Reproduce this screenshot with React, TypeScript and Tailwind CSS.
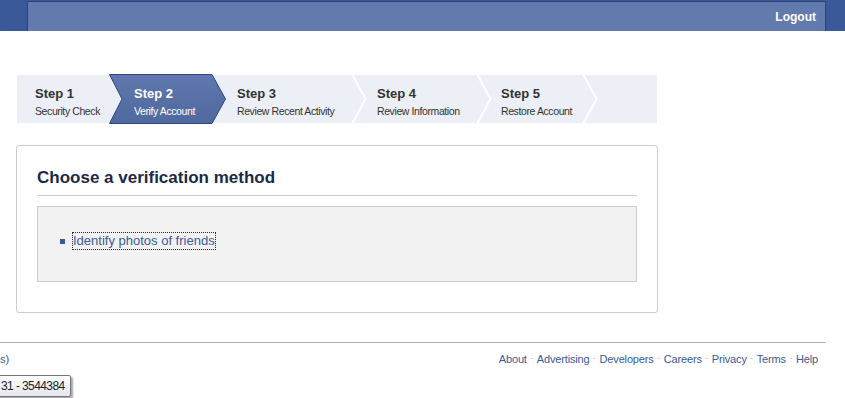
const steps = [
  { title: "Step 1", sub: "Security Check", w: "w-[92px]", pl: "pl-[18px]" },
  { title: "Step 2", sub: "Verify Account", w: "w-[103px]", pl: "pl-[25px]", active: true },
  { title: "Step 3", sub: "Review Recent Activity", w: "w-[140px]", pl: "pl-[25px]", sep: true },
  { title: "Step 4", sub: "Review Information", w: "w-[125px]", pl: "pl-[25px]", sep: true },
  { title: "Step 5", sub: "Restore Account", w: "w-[106px]", pl: "pl-[24px]", sep: true },
]

const footerLinks = ["About", "Advertising", "Developers", "Careers", "Privacy", "Terms", "Help"]

function StepBar() {
  return (
    <div className="ml-px flex h-[48px] w-[640px] bg-[#eceff5]">
      {steps.map((s) => (
        <div key={s.title} className={`relative shrink-0 ${s.w} ${s.pl} pt-[11px]`}>
          {s.active && (
            <svg className="absolute -top-px left-0" width="119" height="50" viewBox="0 0 119 50">
              <defs>
                <linearGradient id="act" x1="0" y1="0" x2="0" y2="1">
                  <stop offset="0" stopColor="#6078ad" />
                  <stop offset="1" stopColor="#4f689e" />
                </linearGradient>
              </defs>
              <polygon
                points="0.5,0.5 103,0.5 116.5,25 103,49.5 0.5,49.5 13,25"
                fill="url(#act)"
                stroke="#2c4784"
                strokeWidth="1"
              />
            </svg>
          )}
          {s.sep && (
            <svg className="absolute top-0 left-full z-10 overflow-visible" width="16" height="48" viewBox="0 0 16 48">
              <polyline points="0,-1 13.5,24 0,49" fill="none" stroke="#ffffff" strokeWidth="2" />
            </svg>
          )}
          <div className={`relative z-20 whitespace-nowrap ${s.active ? "text-white" : "text-[#333333]"}`}>
            <div className="text-[13px] leading-[16px] font-bold">{s.title}</div>
            <div className="mt-[2px] text-[10.5px] leading-[14px] tracking-[-0.4px]">{s.sub}</div>
          </div>
        </div>
      ))}
      <div className="flex-1" />
    </div>
  )
}

export default function App() {
  return (
    <div className="relative min-h-[398px] w-[845px] overflow-hidden bg-white font-['Liberation_Sans',Arial,sans-serif]">
      {/* header */}
      <div className="h-[31px] bg-[#3b5998] pt-px pl-[27px] pr-[19px]">
        <div className="flex h-full items-center justify-end border border-b-0 border-[#27427c] bg-[#627aad] pr-[9px]">
          <span className="text-[12px] leading-[14px] font-bold text-white">Logout</span>
        </div>
      </div>

      {/* main */}
      <div className="w-[826px] pl-[16px]">
        <div className="mt-[44px]">
          <StepBar />
        </div>

        <div className="mt-[22px] w-[642px] rounded-[3px] border border-[#cccccc] px-[20px] pt-[22px] pb-[30px]">
          <h2 className="border-b border-[#cccccc] pb-[7px] text-[17px] leading-[20px] font-bold text-[#1c2a47]">
            Choose a verification method
          </h2>
          <div className="mt-[10px] border border-[#cccccc] bg-[#f2f2f2] pt-[25px] pb-[31px] pl-[22px]">
            <div className="flex items-center">
              <span className="h-[5px] w-[5px] bg-[#3b5998]" />
              <a className="ml-[7px] border border-dotted border-[#1c2a47] text-[13px] leading-[16px] text-[#3b5998]">
                Identify photos of friends
              </a>
            </div>
          </div>
        </div>
      </div>

      {/* footer */}
      <div className="mt-[29px] w-[826px] border-t border-[#b3b3b3] pt-[9px] pr-[8px]">
        <div className="flex justify-between text-[11px] leading-[14px] text-[#3b5998]">
          <span>s)</span>
          <div className="flex items-start">
            {footerLinks.map((l, i) => (
              <span key={l} className="flex items-start">
                {i > 0 && <span className="px-[3.5px] text-[9px] leading-[12px] text-[#999999]">·</span>}
                <span className="tracking-[-0.15px]">{l}</span>
              </span>
            ))}
          </div>
        </div>
      </div>

      {/* tooltip */}
      <div className="mt-[9px] -ml-[4px] inline-block rounded-[2px] border border-[#767676] bg-gradient-to-b from-white to-[#e4e5f0] py-[2px] pr-[5px] pl-[4px] text-[12px] leading-[16px] tracking-[-0.6px] text-[#222222] shadow-[2px_2px_2px_rgba(0,0,0,0.35)]">
        31 - 3544384
      </div>
    </div>
  )
}
